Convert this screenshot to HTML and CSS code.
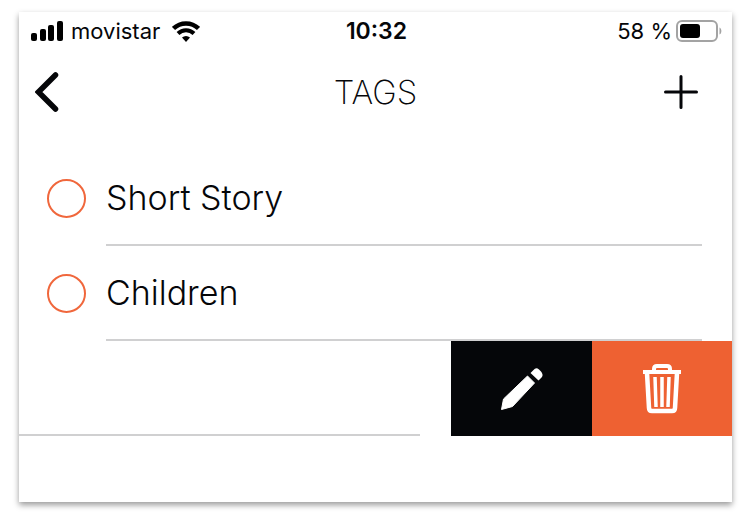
FILE: index.html
```
<!DOCTYPE html>
<html lang="en">
<head>
  <meta charset="UTF-8">
  <meta name="viewport" content="width=device-width, initial-scale=1.0">
  <title>Tags</title>
  <link rel="stylesheet" href="styles.css">
</head>
<body>

  <main class="screen">
    <div class="status">
      <div class="status-left">
        <svg width="32" height="20" viewBox="0 0 32 20">
          <rect x="0" y="12" width="6" height="8" rx="2"/>
          <rect x="9" y="8" width="6" height="12" rx="2"/>
          <rect x="17" y="4" width="6" height="16" rx="2"/>
          <rect x="26" y="0" width="6" height="20" rx="2"/>
        </svg>
        <span class="carrier">movistar</span>
        <svg width="28" height="21" viewBox="0 0 28 21">
          <path d="M1.5 7.5a18 18 0 0 1 25 0" fill="none" stroke="#000" stroke-width="4.5"/>
          <path d="M6 12.500a11.5 11.5 0 0 1 16 0" fill="none" stroke="#000" stroke-width="4"/>
          <path d="M10 16.5a6 6 0 0 1 8 0L14 21z"/>
        </svg>
      </div>
      <span class="time">10:32</span>
      <div class="status-right">
        <span>58 %</span>
        <svg width="46" height="22" viewBox="0 0 46 22">
          <rect x="1" y="1" width="40" height="20" rx="5" fill="none" stroke="#a3a3a3" stroke-width="2"/>
          <rect x="4" y="4" width="20" height="14" rx="3"/>
          <path d="M43.5 7.5c2.5 1 2.5 6 0 7z" fill="#a3a3a3"/>
        </svg>
      </div>
    </div>

    <header class="navbar">
      <button class="back" aria-label="Back">
        <svg width="24" height="40" viewBox="0 0 24 40">
          <path d="M20.5 3 3.5 20l17 17" fill="none" stroke="#050609" stroke-width="5.5" stroke-linecap="round"/>
        </svg>
      </button>
      <h1>TAGS</h1>
      <button class="add" aria-label="Add tag">
        <svg width="34" height="34" viewBox="0 0 34 34">
          <path d="M17 1.5v31M1.5 17h31" fill="none" stroke="#050609" stroke-width="3" stroke-linecap="round"/>
        </svg>
      </button>
    </header>

    <ul class="tags">
      <li class="tag">
        <input type="checkbox" id="short-story">
        <label for="short-story">Short Story</label>
      </li>
      <li class="tag">
        <input type="checkbox" id="children">
        <label for="children">Children</label>
      </li>
      <li class="tag swiped">
        <div class="rest"></div>
        <button class="edit" aria-label="Edit tag">
          <svg width="44" height="44" viewBox="0 0 44 44">
            <path d="M27.5 9 34.5 16 12.5 39.5 1.5 42.5 3.5 32z" fill="#fff" stroke="#fff" stroke-linejoin="round"/>
            <path d="M30.5 6 33.5 3Q36 0 39 2.5L41 4.5Q43.5 7.5 42 10L38.5 13.5z" fill="#fff"/>
          </svg>
        </button>
        <button class="delete" aria-label="Delete tag">
          <svg width="38" height="50" viewBox="0 0 38 50" fill="none" stroke="#fff">
            <path d="M0 8h38" stroke-width="4"/>
            <path d="M11 8V5q0-3 3-3h10q3 0 3 3v3" stroke-width="4"/>
            <path d="M4 9 6 44q0 3 3 3h20q3 0 3-3l2-35" stroke-width="4.5"/>
            <path d="M12 13l1 30M19 13v30M26 13l-1 30" stroke-width="3.5"/>
          </svg>
        </button>
      </li>
    </ul>
  </main>

</body>
</html>
```
FILE: styles.css
```
* {
  box-sizing: border-box;
}
body {
  margin: 0;
  background: #fff;
  color: #050609;
  font-family: 'Inter', 'Liberation Sans', sans-serif;
}
.screen {
  margin: 12px 18px 12px 19px;
  padding-bottom: 66px;
  background: #fff;
  box-shadow: 0 3px 6px rgba(0, 0, 0, 0.4);
}
.status {
  display: grid;
  grid-template-columns: 1fr auto 1fr;
  align-items: center;
  height: 38px;
  padding: 0 10px 0 12px;
  font-size: 22px;
}
.status-left,
.status-right {
  display: flex;
  align-items: center;
  gap: 8px;
}
.status-left svg:last-child {
  margin-left: 4px;
}
.status-right {
  justify-content: flex-end;
  gap: 4px;
}
.time {
  font-size: 23px;
  font-weight: 600;
}
.navbar {
  display: grid;
  grid-template-columns: 1fr auto 1fr;
  align-items: center;
  height: 84px;
}
h1 {
  margin: 0;
  font-size: 33px;
  font-weight: 200;
}
button {
  display: flex;
  align-items: center;
  justify-content: center;
  border: none;
  padding: 0;
  background: none;
  cursor: pointer;
}
.back {
  justify-self: start;
  margin-left: 16px;
}
.add {
  justify-self: end;
  margin-right: 34px;
}
.tags {
  list-style: none;
  margin: 0;
  padding: 17px 0 0;
}
.tag {
  display: flex;
  align-items: center;
  gap: 20px;
  height: 95px;
  padding: 0 30px 0 28px;
}
.tag input {
  appearance: none;
  width: 39px;
  height: 39px;
  margin: 0;
  border: 2px solid #f0673c;
  border-radius: 50%;
}
.tag input:checked {
  background: #ee6132;
}
.tag label {
  flex: 1;
  height: 95px;
  border-bottom: 2px solid #d0d0d1;
  font-size: 34px;
  font-weight: 300;
  line-height: 94px;
}
.swiped {
  align-items: stretch;
  gap: 0;
  padding: 0;
}
.rest {
  flex: 1;
  margin-right: 31px;
  border-bottom: 2px solid #d0d0d1;
}
.edit {
  width: 141px;
  background: #050609;
}
.delete {
  width: 140px;
  background: #ee6132;
}
```
